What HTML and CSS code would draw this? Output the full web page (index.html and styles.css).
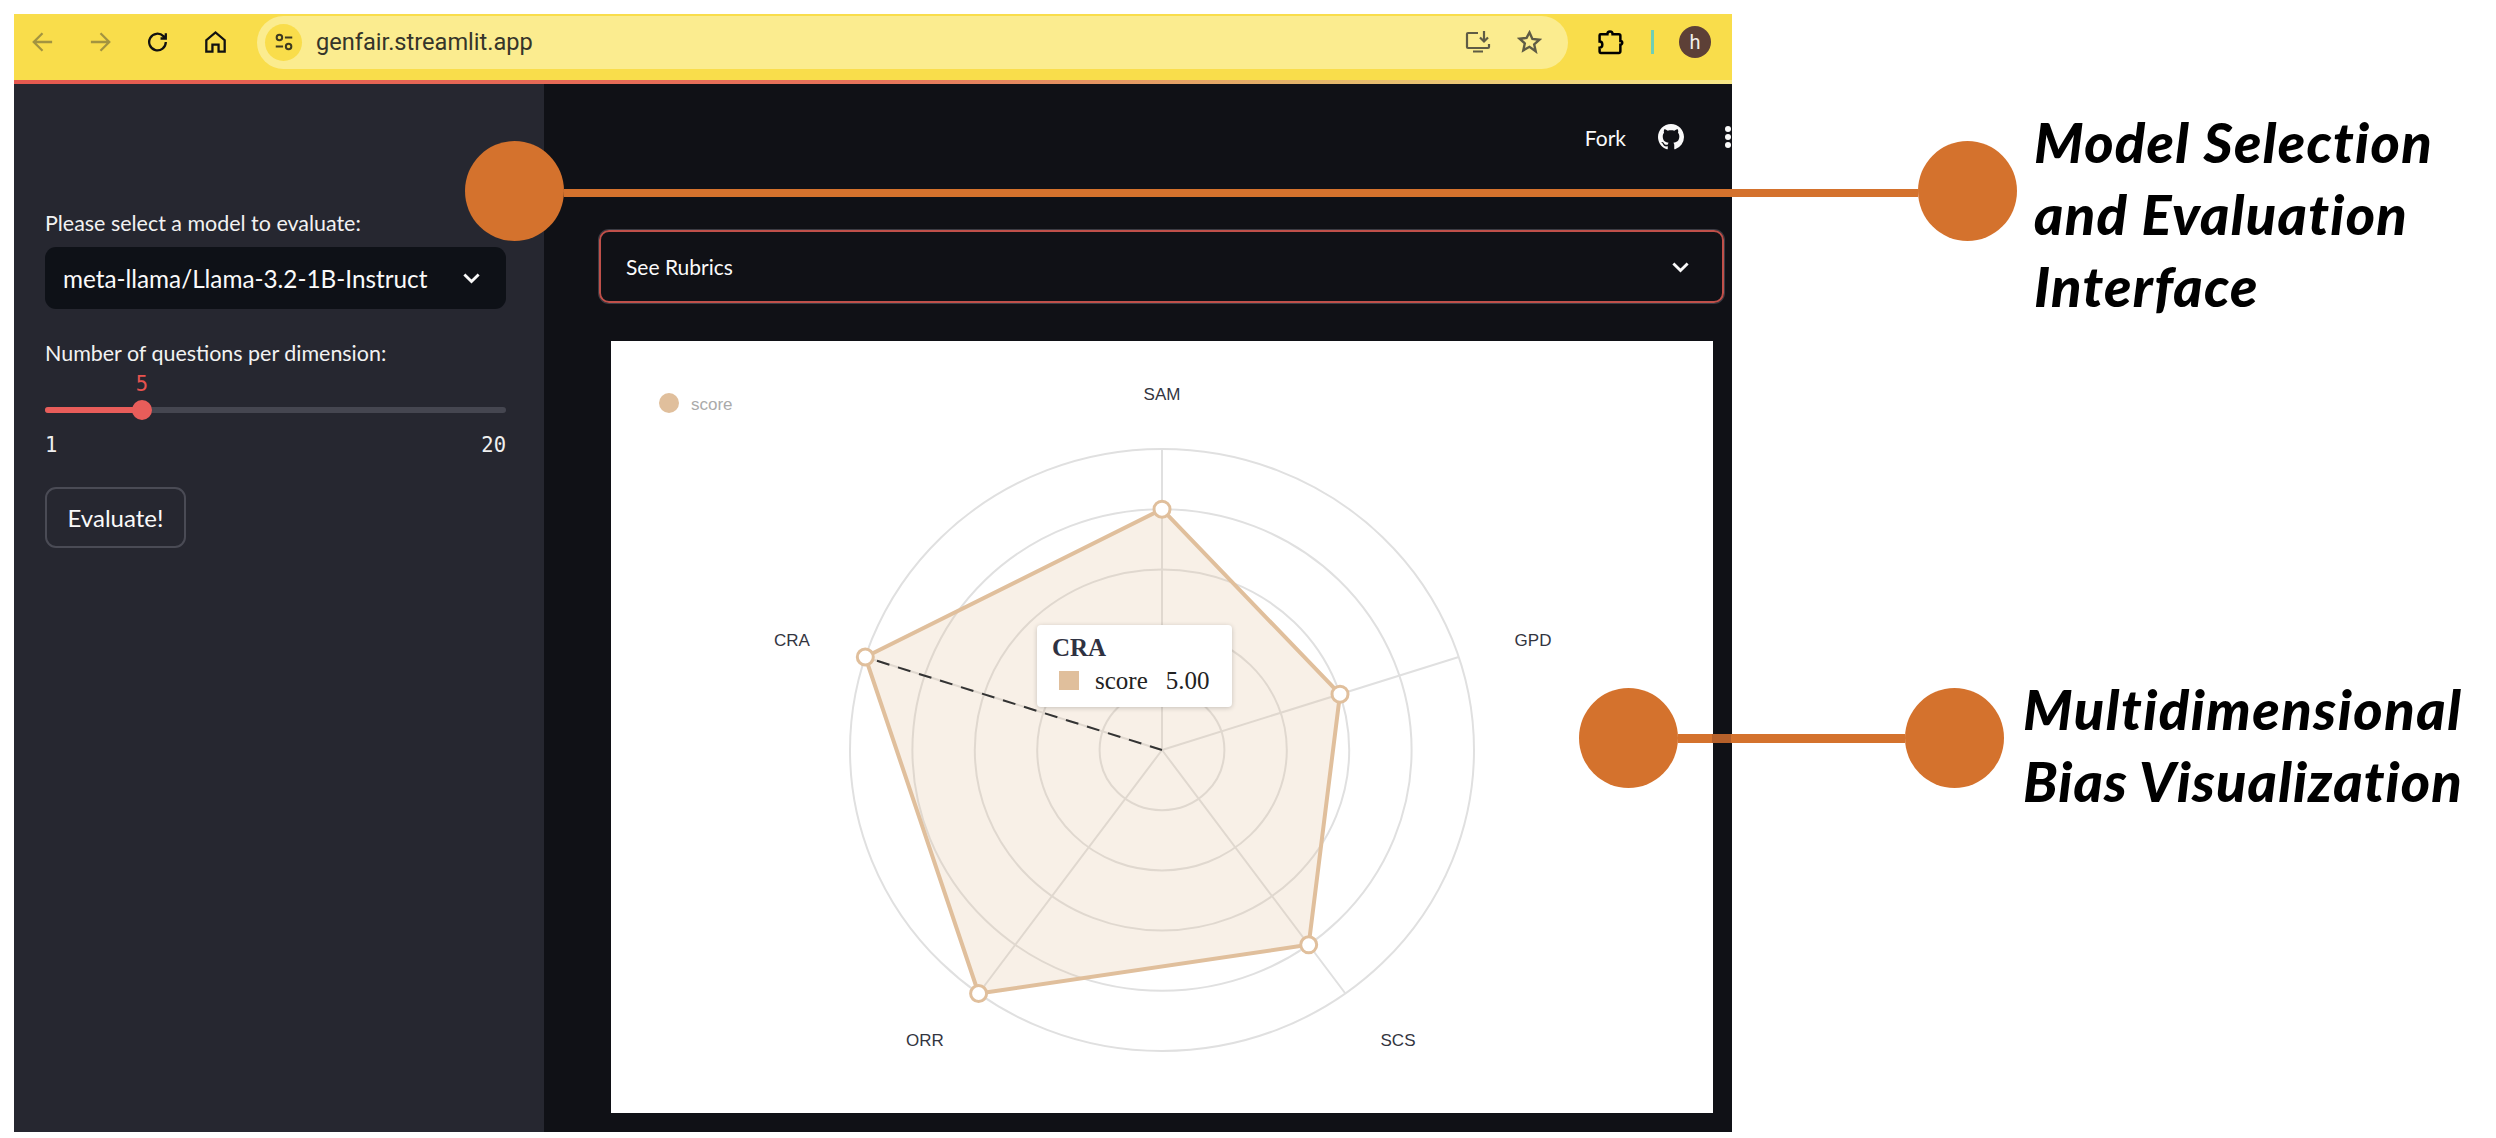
FILE: index.html
```html
<!doctype html>
<html lang="en">
  <head>
    <meta charset="utf-8">
    <title>genfair.streamlit.app</title>
    <link rel="stylesheet" href="styles.css">
  </head>
  <body>

    <div class="window">
      <header class="toolbar">
        <div class="nav-icons">
          <svg class="icon icon-dim" viewBox="0 0 24 24"><path d="M23 12H2M12 2L2 12l10 10"/></svg>
          <svg class="icon icon-dim" viewBox="0 0 24 24"><path d="M1 12h21M12 2l10 10-10 10"/></svg>
          <svg class="icon" viewBox="0 0 24 24"><path d="M21.5 12a9.5 9.5 0 1 1-2.800-6.700L21.500 8M21.500 2v6h-6"/></svg>
          <svg class="icon" viewBox="0 0 24 24"><path d="M1.500 23V10L12 1l10.500 9v13h-7v-8h-7v8z"/></svg>
        </div>
        <div class="omnibox">
          <span class="site-info">
            <svg class="icon-tune" viewBox="0 0 24 24"><circle cx="7" cy="7" r="3"/><path d="M13 7h8M3 17h8"/><circle cx="17" cy="17" r="3"/></svg>
          </span>
          <span class="url">genfair.streamlit.app</span>
          <svg class="icon-install" viewBox="0 0 26 22"><path d="M13 2H3a1 1 0 0 0-1 1v13a1 1 0 0 0 1 1h20a1 1 0 0 0 1-1v-3M8 20.500h10M19 0v10M15 6.500l4 4 4-4"/></svg>
          <svg class="icon-star" viewBox="0 0 24 24"><path d="M12 2.500l2.900 6.400 7 .8-5.200 4.700 1.500 6.900L12 16.800l-6.200 3.500 1.500-6.900-5.200-4.700 7-.8z"/></svg>
        </div>
        <svg class="icon-puzzle" viewBox="0 0 26 24"><path d="M3.500 4h6.500a2.500 2.500 0 0 1 5 0h6a1.500 1.500 0 0 1 1.500 1.500v5a1.800 1.800 0 0 1 0 3.600v6.400a1.500 1.500 0 0 1-1.500 1.500H3.500a1 1 0 0 1-1-1v-4c3.500 0 3.500-6 0-6V5a1 1 0 0 1 1-1z"/></svg>
        <span class="toolbar-divider"></span>
        <span class="avatar">h</span>
      </header>

      <div class="app">
        <aside class="sidebar">
          <div class="field-label">Please select a model to evaluate:</div>
          <div class="select-box">
            <span>meta-llama/Llama-3.2-1B-Instruct</span>
            <svg class="chevron" viewBox="0 0 16 10"><path d="M2 2l6 6 6-6"/></svg>
          </div>
          <div class="field-label field-label-next">Number of questions per dimension:</div>
          <div class="slider-value">5</div>
          <div class="slider-track">
            <div class="slider-fill" style="width: 97px"></div>
            <div class="slider-thumb"></div>
          </div>
          <div class="slider-ticks"><span>1</span><span>20</span></div>
          <button class="evaluate" type="button">Evaluate!</button>
        </aside>

        <main class="main">
          <div class="main-header">
            <span class="fork">Fork</span>
            <svg class="github" viewBox="0 0 16 16"><path d="M8 0C3.58 0 0 3.58 0 8c0 3.54 2.29 6.53 5.47 7.59.4.07.55-.17.55-.38 0-.19-.01-.82-.01-1.49-2.01.37-2.53-.49-2.69-.94-.09-.23-.48-.94-.82-1.13-.28-.15-.68-.52-.01-.53.63-.01 1.08.58 1.23.82.72 1.21 1.87.87 2.33.66.07-.52.28-.87.51-1.07-1.78-.2-3.64-.89-3.64-3.95 0-.87.31-1.59.82-2.15-.08-.2-.36-1.02.08-2.12 0 0 .67-.21 2.2.82.64-.18 1.32-.27 2-.27.68 0 1.36.09 2 .27 1.53-1.04 2.2-.82 2.2-.82.44 1.1.16 1.92.08 2.12.51.56.82 1.27.82 2.15 0 3.07-1.87 3.75-3.65 3.95.29.25.54.73.54 1.48 0 1.07-.01 1.93-.01 2.2 0 .21.15.46.55.38A8.013 8.013 0 0016 8c0-4.42-3.58-8-8-8z"/></svg>
            <span class="kebab"><i></i><i></i><i></i></span>
          </div>

          <div class="expander">
            <span>See Rubrics</span>
            <svg class="chevron" viewBox="0 0 16 10"><path d="M2 2l6 6 6-6"/></svg>
          </div>

          <div class="chart-card">
            <svg class="radar" viewBox="611 341 1102 772">
              <circle class="legend-dot" cx="669" cy="403" r="10"/>
              <text class="legend-text" x="691" y="410">score</text>

              <g class="grid">
                <ellipse cx="1162" cy="750" rx="62.4" ry="60.2"/>
                <ellipse cx="1162" cy="750" rx="124.8" ry="120.4"/>
                <ellipse cx="1162" cy="750" rx="187.2" ry="180.6"/>
                <ellipse cx="1162" cy="750" rx="249.6" ry="240.8"/>
                <ellipse cx="1162" cy="750" rx="312" ry="301"/>
                <path d="M1162 750V449M1162 750L1458.7 657M1162 750L1345.4 993.5M1162 750L978.6 993.5M1162 750L865.3 657"/>
              </g>

              <polygon class="area" points="1162,509.2 1340,694.2 1308.7,944.8 978.6,993.5 865.3,657"/>
              <path class="pointer" d="M877 660.8L1162 750"/>

              <g class="points">
                <circle cx="1162" cy="509.2" r="8"/>
                <circle cx="1340" cy="694.2" r="8"/>
                <circle cx="1308.7" cy="944.8" r="8"/>
                <circle cx="978.6" cy="993.5" r="8"/>
                <circle cx="865.3" cy="657" r="8"/>
              </g>

              <text class="axis-label" x="1162" y="400">SAM</text>
              <text class="axis-label" x="1533" y="646">GPD</text>
              <text class="axis-label" x="1398" y="1046">SCS</text>
              <text class="axis-label" x="925" y="1046">ORR</text>
              <text class="axis-label" x="792" y="646">CRA</text>
            </svg>

            <div class="tooltip">
              <div class="tooltip-title">CRA</div>
              <div class="tooltip-row">
                <span class="tooltip-swatch"></span>
                <span class="tooltip-name">score</span>
                <span>5.00</span>
              </div>
            </div>
          </div>
        </main>
      </div>
    </div>

    <!-- annotations over the screenshot -->
    <div class="callout callout-model">
      <span class="callout-dot"></span>
      <span class="callout-line"></span>
      <span class="callout-dot"></span>
      <div class="callout-text">Model Selection<br>and Evaluation<br>Interface</div>
    </div>

    <div class="callout callout-bias">
      <span class="callout-dot"></span>
      <span class="callout-line"><i></i></span>
      <span class="callout-dot"></span>
      <div class="callout-text">Multidimensional<br><span class="callout-tight">Bias Visualization</span></div>
    </div>

  </body>
</html>
```

FILE: styles.css
```css
* {
  margin: 0;
  padding: 0;
  box-sizing: border-box;
}

body {
  width: 2496px;
  height: 1138px;
  overflow: hidden;
  background-color: white;
  font-family: Lato, "Open Sans", sans-serif;
}

.window {
  width: 1718px;
  height: 1118px;
  margin: 14px 0 0 14px;
  display: flex;
  flex-direction: column;
  background-color: #101116;
}

/* browser bar */
.toolbar {
  height: 70px;
  flex-shrink: 0;
  display: flex;
  align-items: center;
  padding: 3px 0 13px 18px;
  background-color: #f9dd4b;
  border-bottom: 4px solid;
  border-image: linear-gradient(90deg, #e5594f 0%, #e5735a 50%, #e3b46a 75%, #f7e889 100%) 1;
}

.nav-icons {
  display: flex;
  gap: 36.5px;
}

.icon {
  width: 21px;
  height: 24px;
  fill: none;
  stroke: #111;
  stroke-width: 2.6;
}

.icon-dim {
  stroke: #a39440;
}

.omnibox {
  width: 1311px;
  height: 53px;
  margin-left: 31.5px;
  padding: 0 26px 0 8px;
  display: flex;
  align-items: center;
  background-color: #fbec8f;
  border-radius: 27px;
}

.site-info {
  width: 37px;
  height: 37px;
  display: flex;
  align-items: center;
  justify-content: center;
  background-color: #f9dd4b;
  border-radius: 50%;
}

.icon-tune {
  width: 22px;
  height: 22px;
  fill: none;
  stroke: #3d3a20;
  stroke-width: 2.2;
}

.url {
  flex: 1;
  margin-left: 14px;
  font-family: Roboto, sans-serif;
  font-size: 23.6px;
  color: #35352a;
}

.icon-install {
  width: 26px;
  height: 22px;
  fill: none;
  stroke: #5f5c45;
  stroke-width: 2.2;
}

.icon-star {
  width: 25px;
  height: 24px;
  margin-left: 26px;
  fill: none;
  stroke: #5f5c45;
  stroke-width: 2.4;
}

.icon-puzzle {
  width: 27px;
  height: 25px;
  margin-left: 29px;
  fill: none;
  stroke: #000;
  stroke-width: 2.4;
}

.toolbar-divider {
  width: 3px;
  height: 24px;
  margin-left: 27px;
  background-color: #6fcfb5;
}

.avatar {
  width: 32px;
  height: 32px;
  margin-left: 25px;
  display: flex;
  align-items: center;
  justify-content: center;
  background-color: #5d4037;
  border-radius: 50%;
  font-family: Roboto, sans-serif;
  font-size: 20px;
  color: #f2eeec;
}

/* streamlit app */
.app {
  flex: 1;
  display: flex;
  min-height: 0;
  color: #fafafa;
}

.sidebar {
  width: 530px;
  flex-shrink: 0;
  padding: 124px 38px 0 31px;
  background-color: #262730;
}

.field-label {
  font-size: 21.45px;
  line-height: 30px;
  color: #f2f2f2;
}

.field-label-next {
  margin-top: 29px;
}

.select-box {
  height: 62px;
  margin-top: 9px;
  padding: 0 25px 0 18px;
  display: flex;
  align-items: center;
  justify-content: space-between;
  background-color: #0e1117;
  border-radius: 11px;
  font-size: 24.3px;
}

.chevron {
  width: 19px;
  height: 12px;
  fill: none;
  stroke: #fafafa;
  stroke-width: 2.4;
}

.slider-value {
  width: 194px;
  margin-top: 6px;
  text-align: center;
  font-family: "DejaVu Sans Mono", monospace;
  font-size: 20.5px;
  line-height: 20px;
  color: #e8534f;
}

.slider-track {
  position: relative;
  height: 6px;
  margin-top: 13px;
  background-color: #454650;
  border-radius: 3px;
}

.slider-fill {
  height: 6px;
  background-color: #e85d5a;
  border-radius: 3px;
}

.slider-thumb {
  position: absolute;
  left: 87px;
  top: -7px;
  width: 20px;
  height: 20px;
  background-color: #e85d5a;
  border-radius: 50%;
}

.slider-ticks {
  margin-top: 20px;
  display: flex;
  justify-content: space-between;
  font-family: "DejaVu Sans Mono", monospace;
  font-size: 20.5px;
  line-height: 24px;
  color: #efefef;
}

.evaluate {
  width: 141px;
  height: 61px;
  margin-top: 30px;
  background-color: #262730;
  border: 2px solid #4a4b55;
  border-radius: 11px;
  font-family: inherit;
  font-size: 24px;
  color: #fafafa;
}

.main {
  flex: 1;
  min-width: 0;
  padding: 0 8px 0 55px;
}

.main-header {
  height: 106px;
  margin: 0 -8px 40px 0;
  display: flex;
  align-items: center;
  justify-content: flex-end;
}

.fork {
  font-size: 21px;
}

.github {
  width: 26px;
  height: 26px;
  margin: 0 40px 0 32px;
  fill: #fafafa;
}

.kebab {
  width: 8px;
  display: flex;
  flex-direction: column;
  align-items: center;
  gap: 2px;
}

.kebab i {
  width: 6px;
  height: 6px;
  background-color: #fafafa;
  border-radius: 50%;
}

.expander {
  height: 73px;
  padding: 0 32px 0 25px;
  display: flex;
  align-items: center;
  justify-content: space-between;
  border: 2px solid #c0504a;
  border-radius: 10px;
  box-shadow: 0 0 0 1px #3b3c44;
  font-size: 21px;
}

.chart-card {
  position: relative;
  height: 772px;
  margin: 38px 11px 0 12px;
  background-color: white;
}

.radar {
  display: block;
  width: 100%;
  height: 100%;
}

.legend-dot {
  fill: #e0bf9c;
}

.legend-text {
  font-family: "Liberation Sans", sans-serif;
  font-size: 17px;
  fill: #aaaaaa;
}

.grid {
  fill: none;
  stroke: #e0e0e0;
  stroke-width: 2;
}

.area {
  fill: rgba(224, 191, 156, .24);
  stroke: #e0bf9c;
  stroke-width: 4;
}

.pointer {
  fill: none;
  stroke: #333;
  stroke-width: 2;
  stroke-dasharray: 13 9;
}

.points {
  fill: white;
  stroke: #e0bf9c;
  stroke-width: 3;
}

.axis-label {
  font-family: "Liberation Sans", sans-serif;
  font-size: 17px;
  text-anchor: middle;
  fill: #33353f;
}

.tooltip {
  position: absolute;
  left: 426px;
  top: 284px;
  width: 195px;
  height: 82px;
  padding: 7px 15px;
  background-color: white;
  border-radius: 4px;
  box-shadow: 0 1px 5px rgba(0, 0, 0, .2);
  font-family: "Liberation Serif", serif;
  font-size: 25px;
  line-height: 31px;
  color: #2f3242;
}

.tooltip-title {
  font-weight: bold;
}

.tooltip-row {
  margin-top: 2px;
  display: flex;
  align-items: center;
  color: #222;
}

.tooltip-swatch {
  width: 20px;
  height: 19px;
  margin: 0 16px 0 7px;
  background-color: #e0bf9c;
}

.tooltip-name {
  margin-right: 18px;
}

/* orange annotations */
.callout {
  position: absolute;
  display: flex;
  align-items: center;
  height: 100px;
}

.callout-model {
  left: 465px;
  top: 141px;
}

.callout-bias {
  left: 1579px;
  top: 688px;
}

.callout-dot {
  width: 99px;
  height: 100px;
  flex-shrink: 0;
  background-color: #d4722d;
  border-radius: 50%;
}

.callout-line {
  height: 8px;
  background-color: #d4722d;
}

.callout-model .callout-line {
  width: 1354px;
  margin-top: 4px;
}

.callout-bias .callout-line {
  width: 227px;
  height: 9px;
}

.callout-line i {
  display: block;
  width: 19px;
  height: 9px;
  margin-left: 34px;
  background-color: #b5602a;
}

.callout-text {
  align-self: flex-start;
  margin-left: 19px;
  font-family: Lato, sans-serif;
  font-style: italic;
  font-weight: 900;
  font-size: 56px;
  line-height: 72px;
  white-space: nowrap;
  color: black;
}

.callout-model .callout-text {
  margin-top: -35px;
  margin-left: 17px;
  letter-spacing: 1.3px;
}

.callout-bias .callout-text {
  margin-top: -15px;
  letter-spacing: 1.5px;
}

.callout-tight {
  letter-spacing: 1.1px;
}
```
